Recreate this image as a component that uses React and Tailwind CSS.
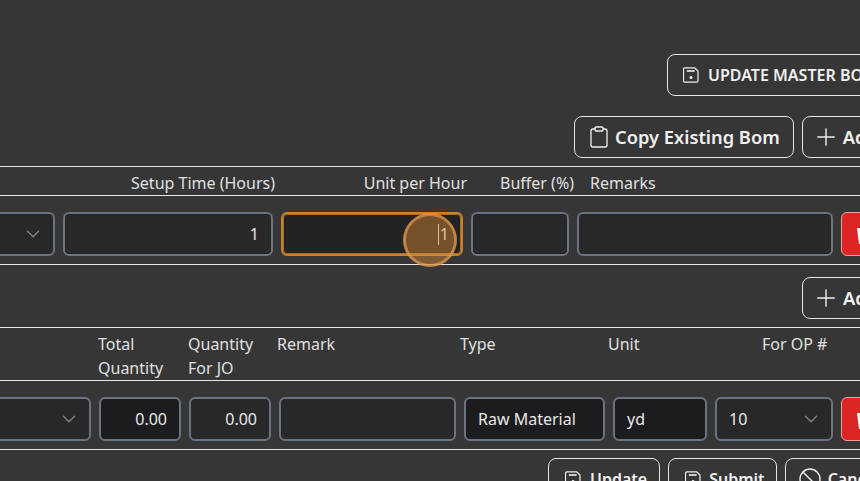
import React from "react";
import { ChevronDown, Plus, Clipboard, Ban } from "lucide-react";

function SaveIcon({ size = 16 }) {
  return (
    <svg width={size} height={size} viewBox="0 0 16 16" fill="none" stroke="currentColor" strokeWidth="1.2" strokeLinejoin="round">
      <path d="M2 .8h9.5l3.5 3.2v9.7a1.5 1.5 0 0 1-1.5 1.5h-11.5a1.5 1.5 0 0 1-1.5-1.5v-11.4a1.5 1.5 0 0 1 1.5-1.5z" />
      <rect x="3.8" y="3.2" width="7.8" height="1.6" fill="currentColor" stroke="none" />
      <circle cx="8" cy="10.6" r="1.5" fill="currentColor" stroke="none" />
    </svg>
  );
}

function TrashIcon() {
  return (
    <svg width="20" height="20" viewBox="0 0 20 20" className="shrink-0">
      <path d="M6 4V2h8v2z" fill="#ffffff" />
      <path d="M0 4h20l-2 16H2z" fill="#ffffff" />
      <path d="M6 8l.6 9M10 8v9M14 8l-.6 9" stroke="#dc2626" strokeWidth="1.6" />
    </svg>
  );
}

const inputBase =
  "h-11 rounded-md border-2 px-3 flex items-center text-base text-[#e8e8e8]";

function Field({ children, className = "", right = false, dark = false, focus = false }) {
  const bg = dark ? "bg-[#1c1c1e]" : focus ? "bg-[#232323]" : "bg-[#282828]";
  const border = focus ? "border-[#c8822f] shadow-[inset_0_0_0_1px_#a86c28]" : "border-[#6b7280]";
  return (
    <div className={`${inputBase} ${bg} ${border} ${right ? "justify-end" : ""} ${className}`}>
      {children}
    </div>
  );
}

function Select({ children, className = "" }) {
  return (
    <div className={`${inputBase} border-[#6b7280] bg-[#282828] justify-between ${className}`}>
      <span>{children}</span>
      <ChevronDown size={22} strokeWidth={1.5} className="-mr-[3px] text-[#7f8388]" />
    </div>
  );
}

function OutlineButton({ icon, children, className = "" }) {
  return (
    <button className={`flex h-[42px] items-center rounded-lg border border-[#e5e5e5] bg-transparent whitespace-nowrap text-[#f0f0f0] font-semibold ${className}`}>
      {icon}
      {children}
    </button>
  );
}

function DeleteButton() {
  return (
    <div className="flex h-11 w-[60px] items-center rounded-md border border-[#f0a0a0] bg-[#dc2626] pl-[15px]">
      <TrashIcon />
    </div>
  );
}

export default function App() {
  return (
    <div className="relative h-[481px] w-[860px] overflow-hidden bg-[#363636]" style={{ fontFamily: '"Noto Sans", sans-serif' }}>
      <div className="-ml-[100px] w-[1100px] pt-[54px]">
        <div className="pl-[767px]">
          <OutlineButton className="gap-[9px] pl-[15px] pr-4 text-base" icon={<SaveIcon size={16} />}>
            UPDATE MASTER BOM
          </OutlineButton>
        </div>

        <div className="mt-5 flex gap-2 pl-[674px]">
          <OutlineButton className="gap-1 pl-3 pr-[13px] text-[18.3px]" icon={<Clipboard size={24} strokeWidth={1.3} />}>
            Copy Existing Bom
          </OutlineButton>
          <OutlineButton className="gap-[3px] px-[9px] text-[18.3px]" icon={<Plus size={28} strokeWidth={1.2} />}>
            Add Row
          </OutlineButton>
        </div>

        <div className="mt-2 border-t border-[#e5e5e5]">
          <div className="grid h-[29px] grid-cols-[159px_218px_190px_107px_263px_100px] items-center border-b border-[#e5e5e5] pt-[3px] text-base text-[#e0e0e0]">
            <div></div>
            <div className="pr-[2px] text-right">Setup Time (Hours)</div>
            <div className="text-right">Unit per Hour</div>
            <div className="text-right">Buffer (%)</div>
            <div className="pl-[16px]">Remarks</div>
            <div></div>
          </div>
          <div className="flex h-[69px] items-start gap-2 border-b border-[#e5e5e5] pl-[4px] pt-4">
            <Select className="w-[151px]"></Select>
            <Field right className="w-[210px]">1</Field>
            <Field right focus className="w-[182px]">
              <span className="flex items-center gap-px">
                <span className="h-[21px] w-px bg-[#e8e8e8]"></span>
                1
              </span>
            </Field>
            <Field className="w-[98px]"></Field>
            <Field className="w-[256px]"></Field>
            <DeleteButton />
          </div>
        </div>

        <div className="h-[62px] pl-[902px] pt-3">
          <OutlineButton className="gap-[3px] px-[9px] text-[18.3px]" icon={<Plus size={28} strokeWidth={1.2} />}>
            Add Row
          </OutlineButton>
        </div>

        <div className="border-t border-[#e5e5e5]">
          <div className="grid h-[53px] grid-cols-[194px_90px_90px_182px_148px_154px_100px] items-start border-b border-[#e5e5e5] pt-1 text-base leading-6 text-[#e0e0e0]">
            <div></div>
            <div className="pl-[4px]">Total<br />Quantity</div>
            <div className="pl-[4px]">Quantity<br />For JO</div>
            <div className="pl-[3px]">Remark</div>
            <div className="pl-[4px]">Type</div>
            <div className="pl-[4px]">Unit</div>
            <div className="pl-[4px]">For OP #</div>
          </div>
          <div className="flex h-[69px] items-start gap-2 border-b border-[#e5e5e5] pl-[4px] pt-4">
            <Select className="w-[187px]"></Select>
            <Field right dark className="w-[82px]">0.00</Field>
            <Field right className="w-[82px]">0.00</Field>
            <Field className="w-[177px]"></Field>
            <Field dark className="w-[141px]">Raw Material</Field>
            <Field dark className="w-[94px]">yd</Field>
            <Select className="w-[118px]">10</Select>
            <DeleteButton />
          </div>
        </div>

        <div className="mt-2 flex gap-2 pl-[648px]">
          <OutlineButton className="gap-[9px] pl-4 pr-3 text-base" icon={<SaveIcon size={16} />}>Update</OutlineButton>
          <OutlineButton className="gap-2 pl-4 pr-[11px] text-base" icon={<SaveIcon size={16} />}>Submit</OutlineButton>
          <OutlineButton className="gap-[6px] px-3 text-base" icon={<Ban size={24} strokeWidth={1.4} />}>Cancel</OutlineButton>
        </div>
      </div>

      <div className="absolute left-[403px] top-[213px] h-[54px] w-[54px] rounded-full border-[3px] border-[#e09a50]/70 bg-[#d98a32]/45"></div>
    </div>
  );
}
